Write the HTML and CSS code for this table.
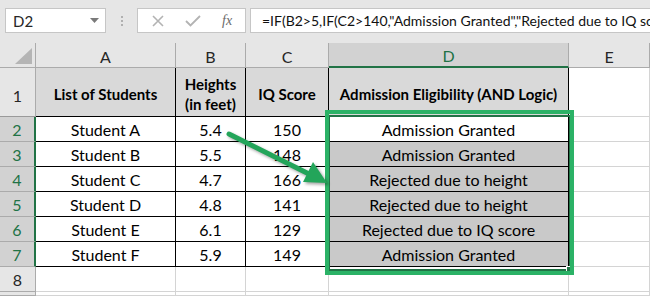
FILE: index.html
```html
<!DOCTYPE html>
<html>
<head>
<meta charset="UTF-8">
<title>Admission Eligibility</title>
<meta name="viewport" content="width=device-width, initial-scale=1.0">
<link rel="stylesheet" href="styles.css">
</head>
<body>

	<!-- 수식 입력줄 -->
	<div class="toolbar">
		<div class="namebox">
			<span>D2</span>
			<svg class="caret" width="9" height="5" viewBox="0 0 9 5"><path d="M0 0h9L4.5 5z" fill="#7a7a7a"/></svg>
		</div>
		<div class="grip"><i></i><i></i><i></i></div>
		<div class="fxbox">
			<svg width="14" height="14" viewBox="0 0 14 14"><path d="M2 2l10 10M12 2L2 12" stroke="#b3b3b3" stroke-width="1.6" fill="none"/></svg>
			<svg width="16" height="14" viewBox="0 0 16 14"><path d="M1 7l4.5 4.5L15 2" stroke="#b3b3b3" stroke-width="1.8" fill="none"/></svg>
			<span class="fx">fx</span>
		</div>
		<div class="formula">=IF(B2&gt;5,IF(C2&gt;140,"Admission Granted","Rejected due to IQ score"),"Rejected due to height")</div>
	</div>

	<!-- 시트 -->
	<div class="sheet">
		<div class="corner"><b></b></div>
		<div class="colhead">A</div>
		<div class="colhead">B</div>
		<div class="colhead">C</div>
		<div class="colhead on">D</div>
		<div class="colhead">E</div>

		<div class="rowhead tall">1</div>
		<div class="cell th">List of Students</div>
		<div class="cell th">Heights<br>(in feet)</div>
		<div class="cell th">IQ Score</div>
		<div class="cell th">Admission Eligibility (AND Logic)</div>
		<div class="cell"></div>

		<div class="rowhead on">2</div>
		<div class="cell td">Student A</div>
		<div class="cell td">5.4</div>
		<div class="cell td">150</div>
		<div class="cell td res first">Admission Granted</div>
		<div class="cell"></div>

		<div class="rowhead on">3</div>
		<div class="cell td">Student B</div>
		<div class="cell td">5.5</div>
		<div class="cell td">148</div>
		<div class="cell td res">Admission Granted</div>
		<div class="cell"></div>

		<div class="rowhead on">4</div>
		<div class="cell td">Student C</div>
		<div class="cell td">4.7</div>
		<div class="cell td">166</div>
		<div class="cell td res">Rejected due to height</div>
		<div class="cell"></div>

		<div class="rowhead on">5</div>
		<div class="cell td">Student D</div>
		<div class="cell td">4.8</div>
		<div class="cell td">141</div>
		<div class="cell td res">Rejected due to height</div>
		<div class="cell"></div>

		<div class="rowhead on">6</div>
		<div class="cell td">Student E</div>
		<div class="cell td">6.1</div>
		<div class="cell td">129</div>
		<div class="cell td res">Rejected due to IQ score</div>
		<div class="cell"></div>

		<div class="rowhead on">7</div>
		<div class="cell td">Student F</div>
		<div class="cell td">5.9</div>
		<div class="cell td">149</div>
		<div class="cell td res">Admission Granted</div>
		<div class="cell"></div>

		<div class="rowhead">8</div>
		<div class="cell"></div>
		<div class="cell"></div>
		<div class="cell"></div>
		<div class="cell"></div>
		<div class="cell"></div>

		<div class="rowhead"></div>
		<div class="cell"></div>
		<div class="cell"></div>
		<div class="cell"></div>
		<div class="cell"></div>
		<div class="cell"></div>
	</div>

	<!-- 선택 영역 + 강조 표시 -->
	<div class="selection"><span class="handle"></span></div>
	<div class="callout"></div>

	<svg class="arrow" width="650" height="296" viewBox="0 0 650 296">
		<line x1="229" y1="134" x2="309" y2="174" stroke="#23a55a" stroke-width="5" stroke-linecap="round"/>
		<polygon points="327,183 303,182 313,162" fill="#23a55a"/>
	</svg>

</body>
</html>
```

FILE: styles.css
```css
body {
	margin: 0;
	width: 650px;
	height: 296px;
	overflow: hidden;
	background: #fff;
	font-family: Lato, "Open Sans", sans-serif;
	font-size: 15px;
	color: #000;
	position: relative;
}

.toolbar {
	height: 43px;
	background: #e6e6e6;
	display: flex;
	align-items: flex-start;
	padding-top: 8px;
	box-sizing: border-box;
	white-space: nowrap;
}

.namebox {
	margin-left: 5px;
	width: 101px;
	height: 25px;
	box-sizing: border-box;
	border: 1px solid #c6c6c6;
	background: #fff;
	display: flex;
	align-items: center;
	justify-content: space-between;
	padding: 0 6px 0 7px;
	color: #262626;
}

.grip {
	width: 31px;
	height: 25px;
	display: flex;
	flex-direction: column;
	align-items: center;
	justify-content: center;
	gap: 2px;
}

.grip i {
	width: 2px;
	height: 2px;
	background: #b0b0b0;
}

.fxbox {
	width: 109px;
	height: 25px;
	box-sizing: border-box;
	border: 1px solid #c6c6c6;
	background: #fff;
	display: flex;
	align-items: center;
	padding-left: 13px;
	gap: 20px;
}

.fx {
	font-family: "Liberation Serif", serif;
	font-style: italic;
	font-size: 14px;
	color: #6a6a6a;
	margin-left: 1px;
}

.formula {
	margin-left: 4px;
	flex: 1;
	min-width: 0;
	height: 25px;
	box-sizing: border-box;
	border: 1px solid #c6c6c6;
	border-right: 0;
	background: #fff;
	padding-left: 11px;
	font-size: 14px;
	line-height: 23px;
	overflow: hidden;
	color: #111;
}

.sheet {
	display: grid;
	grid-template-columns: 36px 140px 70px 83px 240px 81px;
	grid-template-rows: 25px 49px repeat(7, 25px) 4px;
	overflow: hidden;
}

.sheet > div {
	box-sizing: border-box;
	border-right: 1px solid #d4d4d4;
	border-bottom: 1px solid #d4d4d4;
	display: flex;
	align-items: center;
	justify-content: center;
	text-align: center;
	white-space: nowrap;
	overflow: hidden;
}

.corner {
	background: #e6e6e6;
	border-right-color: #ababab !important;
	border-bottom-color: #ababab !important;
	align-items: flex-end !important;
	justify-content: flex-end !important;
}

.corner b {
	width: 17px;
	height: 16px;
	margin: 0 3px 3px 0;
	background: #b5b5b5;
	clip-path: polygon(100% 0, 100% 100%, 0 100%);
}

.colhead {
	background: #e6e6e6;
	color: #262626;
	font-size: 16px;
	border-right-color: #ababab !important;
	border-bottom-color: #ababab !important;
	padding-top: 2px;
}

.colhead.on {
	background: #d2d2d2;
	color: #217346;
	border-bottom: 2px solid #217346 !important;
}

.rowhead {
	background: #e6e6e6;
	color: #262626;
	font-size: 16px;
	border-right-color: #ababab !important;
	border-bottom-color: #ababab !important;
}

.rowhead.tall {
	align-items: flex-end !important;
	padding-bottom: 11px;
	border-bottom-color: #9a9a9a !important;
}

.rowhead.on {
	background: #d2d2d2;
	color: #217346;
	border-right: 2px solid #217346 !important;
}

.th {
	background: #d9d9d9;
	font-weight: bold;
	line-height: 20px;
	border-right-color: #000 !important;
	border-bottom-color: #000 !important;
	padding-top: 4px;
}

.td {
	font-size: 16px;
	border-right-color: #000 !important;
	border-bottom-color: #000 !important;
	padding-top: 1px;
}

.res {
	background: #c9c9c9;
}

.res.first {
	background: #fff;
}

/* 엑셀 선택 테두리 */
.selection {
	position: absolute;
	left: 328px;
	top: 115px;
	width: 243px;
	height: 156px;
	box-sizing: border-box;
	border: 2px solid #217346;
}

.handle {
	position: absolute;
	right: -5px;
	bottom: -5px;
	width: 6px;
	height: 6px;
	background: #217346;
	border: 1px solid #fff;
}

/* 강조용 초록 박스 */
.callout {
	position: absolute;
	left: 325px;
	top: 110px;
	width: 249px;
	height: 165px;
	box-sizing: border-box;
	border: 4px solid #2bb266;
}

.arrow {
	position: absolute;
	left: 0;
	top: 0;
	pointer-events: none;
	filter: drop-shadow(2px 2px 1.5px rgba(0, 0, 0, 0.35));
}
```
